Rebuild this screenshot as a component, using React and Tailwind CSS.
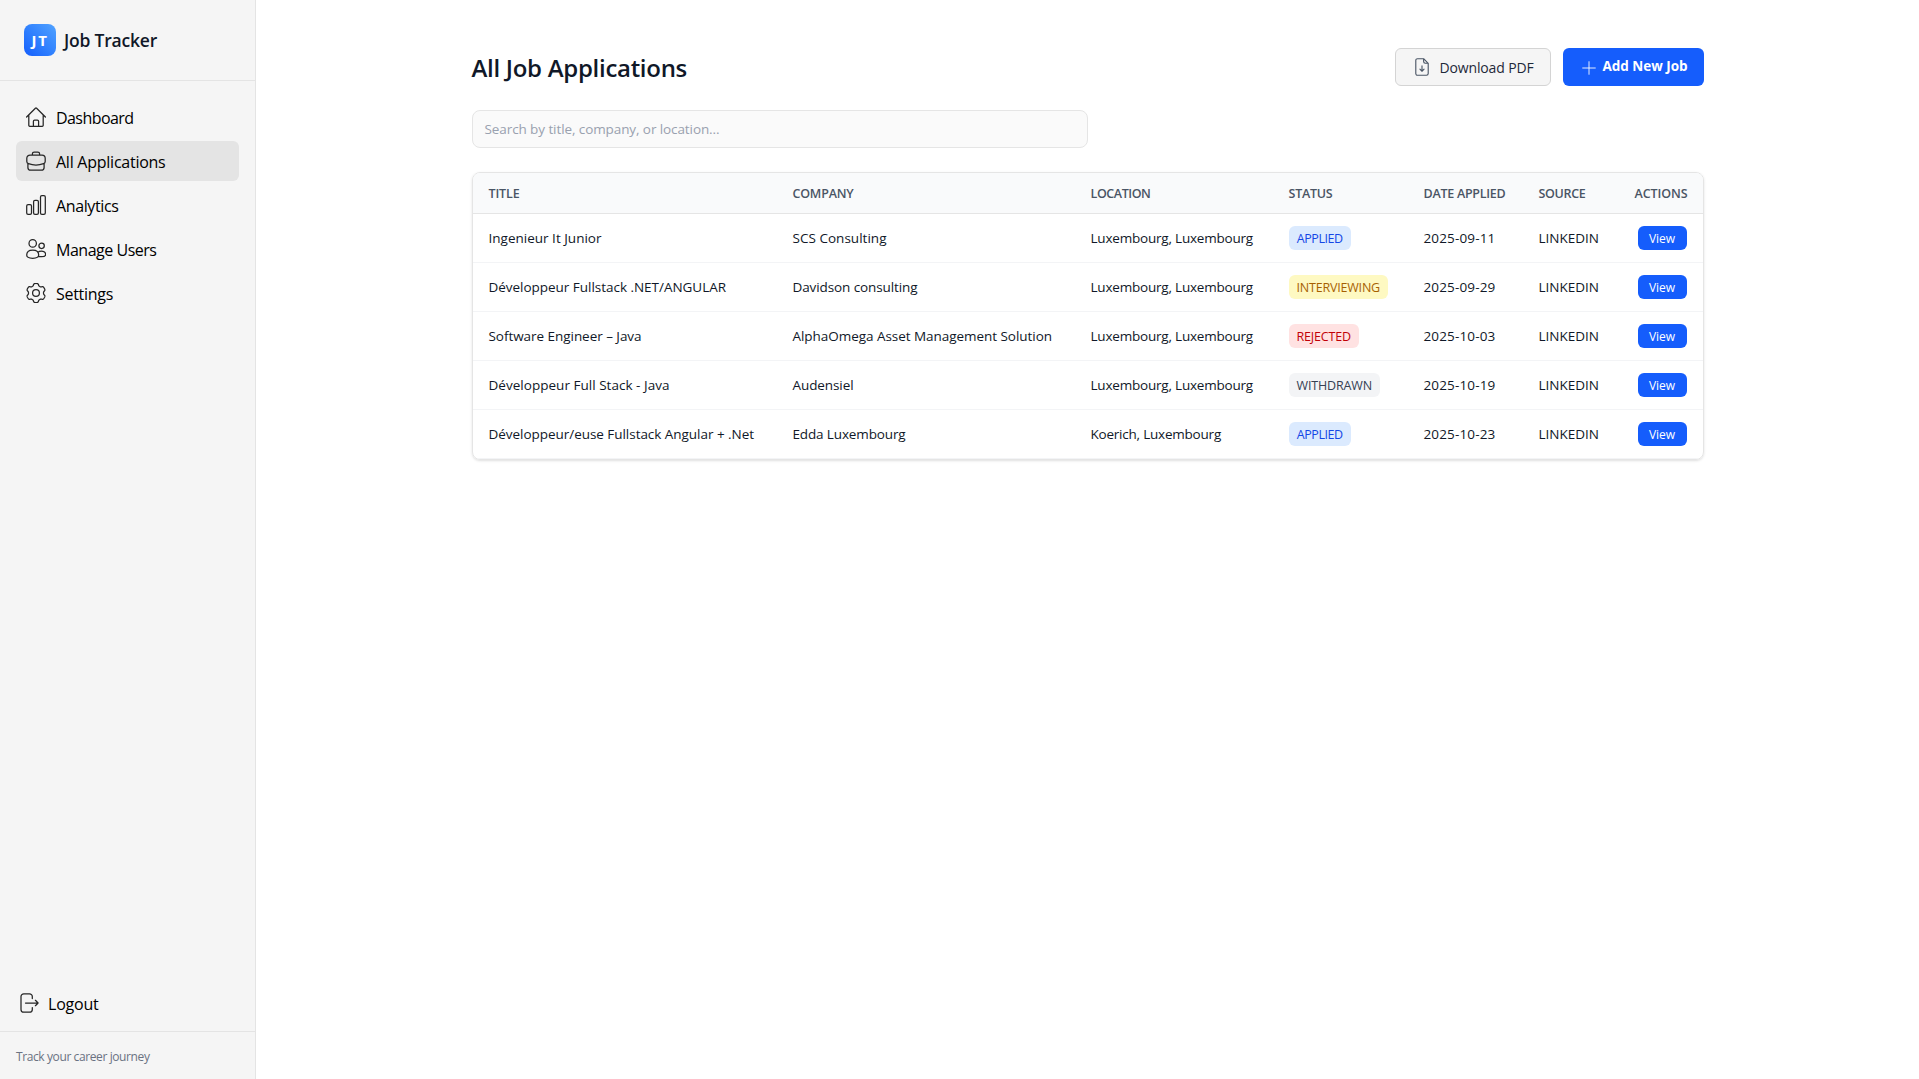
const FONT = "font-['Segoe_UI','Open_Sans',sans-serif]";

/* Fits a run of text to a fixed advance width. */
function T({ w, children, pad = "pt-px", className = "" }) {
  const fit = (el) => {
    if (!el || el.dataset.fit) return;
    el.dataset.fit = "1";
    const n = el.textContent.length;
    el.style.letterSpacing = (w - el.getBoundingClientRect().width) / n + "px";
  };
  return <span ref={fit} className={"inline-block whitespace-pre " + pad + " " + className}>{children}</span>;
}

function Icon({ children, size = 20, className = "" }) {
  return (
    <svg width={size} height={size} viewBox="0 0 20 20" fill="none" stroke="currentColor" strokeWidth="1.25" strokeLinecap="round" strokeLinejoin="round" className={"shrink-0 " + className}>
      {children}
    </svg>
  );
}

/* Outline of a gear with six soft teeth, one of them pointing up. */
const gear =
  Array.from({ length: 120 }, (_, i) => {
    const a = (i * Math.PI) / 60;
    const r = 8.5 + 1.05 * Math.tanh(-2.2 * Math.cos(6 * a) + 0.5);
    return `${i ? "L" : "M"}${(10 + r * Math.cos(a)).toFixed(2)} ${(10 + r * Math.sin(a)).toFixed(2)}`;
  }).join("") + "Z";

const nav = [
  { label: "Dashboard", w: 77.5, icon: <path d="M.6 10 9.4 1.2a.85.85 0 0 1 1.2 0L19.4 10M2.8 8V18.2a1.2 1.2 0 0 0 1.2 1.2H16a1.2 1.2 0 0 0 1.2-1.2V8M7.4 19.4V14.2a1.2 1.2 0 0 1 1.2-1.2h2.8a1.2 1.2 0 0 1 1.2 1.2v5.2" /> },
  { label: "All Applications", w: 109.5, active: true, icon: <path d="M6.4 4V2.8A1.8 1.8 0 0 1 8.2 1h3.6a1.8 1.8 0 0 1 1.8 1.8V4M4 4h12a3.2 3.2 0 0 1 3.2 3.2v3.3c0 1.2-.5 1.8-1.6 2.2-4.8 1.7-10.4 1.7-15.2 0C1.3 12.3.8 11.7.8 10.5V7.2A3.2 3.2 0 0 1 4 4ZM1.9 12.6v3.8a2.8 2.8 0 0 0 2.8 2.8h10.6a2.8 2.8 0 0 0 2.8-2.8v-3.8" /> },
  { label: "Analytics", w: 62.5, icon: <><rect x=".7" y="9.7" width="4.8" height="9.6" rx="1.4" /><rect x="7.6" y="5.4" width="4.8" height="13.9" rx="1.4" /><rect x="14.5" y=".7" width="4.8" height="18.6" rx="1.4" /></> },
  { label: "Manage Users", w: 100.5, icon: <><circle cx="6.7" cy="4.4" r="3.7" /><circle cx="15.6" cy="6.8" r="2.7" /><path d="M6.7 11c3.8 0 6 2.2 6 5.1 0 1.9-2.4 3.2-6 3.2s-6-1.3-6-3.2C.7 13.2 2.9 11 6.7 11ZM12 13.200c.9-.7 2.1-1 3.4-1 2.500 0 4.200 1.500 4.200 3.500 0 1.200-1.600 1.900-4.200 1.900-1.100 0-2.100-.1-2.900-.3" /></> },
  { label: "Settings", w: 57, icon: <><circle cx="10" cy="10" r="3.4" /><path d={gear} /></> },
];

const rows = [
  ["Ingenieur It Junior", 113, "SCS Consulting", 94, "Luxembourg, Luxembourg", 162.5, "APPLIED", "2025-09-11"],
  ["Développeur Fullstack .NET/ANGULAR", 237.5, "Davidson consulting", 125, "Luxembourg, Luxembourg", 162.5, "INTERVIEWING", "2025-09-29"],
  ["Software Engineer – Java", 153, "AlphaOmega Asset Management Solution", 259.5, "Luxembourg, Luxembourg", 162.5, "REJECTED", "2025-10-03"],
  ["Développeur Full Stack - Java", 181, "Audensiel", 61, "Luxembourg, Luxembourg", 162.5, "WITHDRAWN", "2025-10-19"],
  ["Développeur/euse Fullstack Angular + .Net", 265.5, "Edda Luxembourg", 113, "Koerich, Luxembourg", 130.5, "APPLIED", "2025-10-23"],
];

const statuses = {
  APPLIED: ["bg-blue-100 text-blue-700", "w-[62.5px]", 46],
  INTERVIEWING: ["bg-yellow-100 text-yellow-700", "w-[99.5px]", 83.5],
  REJECTED: ["bg-red-100 text-red-700", "w-[70.5px]", 54.5],
  WITHDRAWN: ["bg-gray-100 text-gray-700", "w-[91.5px]", 75.5],
};

const COLS = "grid grid-cols-[304px_298px_198px_135px_115px_96px_1fr] items-center";

const heads = [["TITLE", 31], ["COMPANY", 61], ["LOCATION", 60], ["STATUS", 44], ["DATE APPLIED", 82], ["SOURCE", 47], ["ACTIONS", 53]];

export default function App() {
  return (
    <div className={"flex h-[1079px] w-full overflow-hidden bg-white text-gray-900 " + FONT}>
      <aside className="flex w-64 shrink-0 flex-col border-r border-[#e4e4e4] bg-[#f5f5f5]">
        <div className="flex h-[81px] items-center gap-2 border-b border-[#e4e4e4] px-6">
          <div className="flex size-8 items-center justify-center rounded-lg bg-linear-to-tr from-[#155dfc] to-[#51a2ff] text-[15px] font-bold text-white">
            <T w={17}>JT</T>
          </div>
          <T w={93} className="text-[17.5px] font-semibold">Job Tracker</T>
        </div>
        <nav className="flex flex-1 flex-col gap-1 px-4 pt-4 text-black">
          {nav.map((n) => (
            <a key={n.label} className={"flex h-10 items-center gap-2.5 rounded-md px-2.5 " + (n.active ? "bg-[#e4e4e4]" : "")}>
              <Icon className="text-[#262626]">{n.icon}</Icon>
              <T w={n.w} className="text-[16px]">{n.label}</T>
            </a>
          ))}
        </nav>
        <div className="flex h-14 items-center gap-2 px-5 text-black">
          <Icon className="text-[#262626]"><path d="M12.3 5.5V3.6A2.8 2.8 0 0 0 9.5.8H3.8A2.8 2.8 0 0 0 1 3.6v12.8a2.8 2.8 0 0 0 2.8 2.8h5.7a2.8 2.8 0 0 0 2.8-2.8v-1.9M5.5 10h12.6M15.4 7.3 18.1 10l-2.7 2.7" /></Icon>
          <T w={50.5} className="text-[16px]">Logout</T>
        </div>
        <div className="flex h-12 items-center border-t border-[#e4e4e4] px-4 text-[12px] text-gray-500">
          <T w={133.5} pad="pt-[3px]">Track your career journey</T>
        </div>
      </aside>

      <main className="flex flex-1 justify-center pt-12">
        <div className="w-[1232px]">
          <header className="flex h-[38px] items-center justify-between">
            <h1 className="text-[24px] font-semibold"><T w={215.5}>All Job Applications</T></h1>
            <div className="flex gap-3 text-[14px]">
              <button className="flex h-[38px] w-[156px] items-center gap-[9px] rounded-md border border-[#d4d4d4] bg-[#f5f5f5] pl-[17px] font-medium text-gray-800">
                <Icon size={18} className="text-gray-600"><path d="M11.8.8H5A1.9 1.9 0 0 0 3.1 2.7v14.6A1.9 1.9 0 0 0 5 19.2h10a1.9 1.9 0 0 0 1.9-1.9V5.9ZM11.8.8V4a1.9 1.9 0 0 0 1.9 1.9h3.2M10 8.8v5.8M7.7 12.4l2.3 2.3 2.3-2.3" /></Icon>
                <T w={94} pad="pt-0">Download PDF</T>
              </button>
              <button className="flex h-[38px] w-[141px] items-center gap-[7px] rounded-md bg-[#155dfc] pl-[19px] text-[13.5px] font-bold text-white">
                <Icon size={14} className="mt-0.5"><path d="M10 1v18M1 10h18" /></Icon>
                <T w={85} pad="pb-px">Add New Job</T>
              </button>
            </div>
          </header>

          <div className="mt-6 flex h-[38px] w-[616px] items-center rounded-lg border border-[#e5e5e5] bg-[#fafafa] px-3 text-[13.5px] text-gray-400">
            <T w={235}>Search by title, company, or location...</T>
          </div>

          <section className="mt-6 overflow-hidden rounded-lg border border-[#e5e5e5] text-[13.5px] shadow-sm">
            <div className={COLS + " h-[41px] border-b border-[#e5e5e5] bg-gray-50 px-4 text-[12.5px] font-semibold text-gray-600"}>
              {heads.map(([h, w], i) => (
                <div key={h} className={"flex " + (i === 6 ? "justify-end" : "")}><T w={w} pad="pt-0.5">{h}</T></div>
              ))}
            </div>
            {rows.map((r) => (
              <div key={r[0]} className={COLS + " h-[49px] border-b border-gray-100 px-4"}>
                <T w={r[1]} className="justify-self-start">{r[0]}</T>
                <T w={r[3]} className="justify-self-start">{r[2]}</T>
                <T w={r[5]} className="justify-self-start">{r[4]}</T>
                <div className={"flex h-6 items-center justify-center rounded-md text-[12.5px] font-semibold " + statuses[r[6]][0] + " justify-self-start " + statuses[r[6]][1]}>
                  <T w={statuses[r[6]][2]} pad="pt-0.5" className="font-medium">{r[6]}</T>
                </div>
                <T w={72} className="justify-self-start">{r[7]}</T>
                <T w={60.5} className="justify-self-start">LINKEDIN</T>
                <button className="flex h-6 w-[49px] items-center justify-center justify-self-end rounded-md bg-[#155dfc] text-[12px] font-medium text-white"><T w={26}>View</T></button>
              </div>
            ))}
          </section>
        </div>
      </main>
    </div>
  );
}
